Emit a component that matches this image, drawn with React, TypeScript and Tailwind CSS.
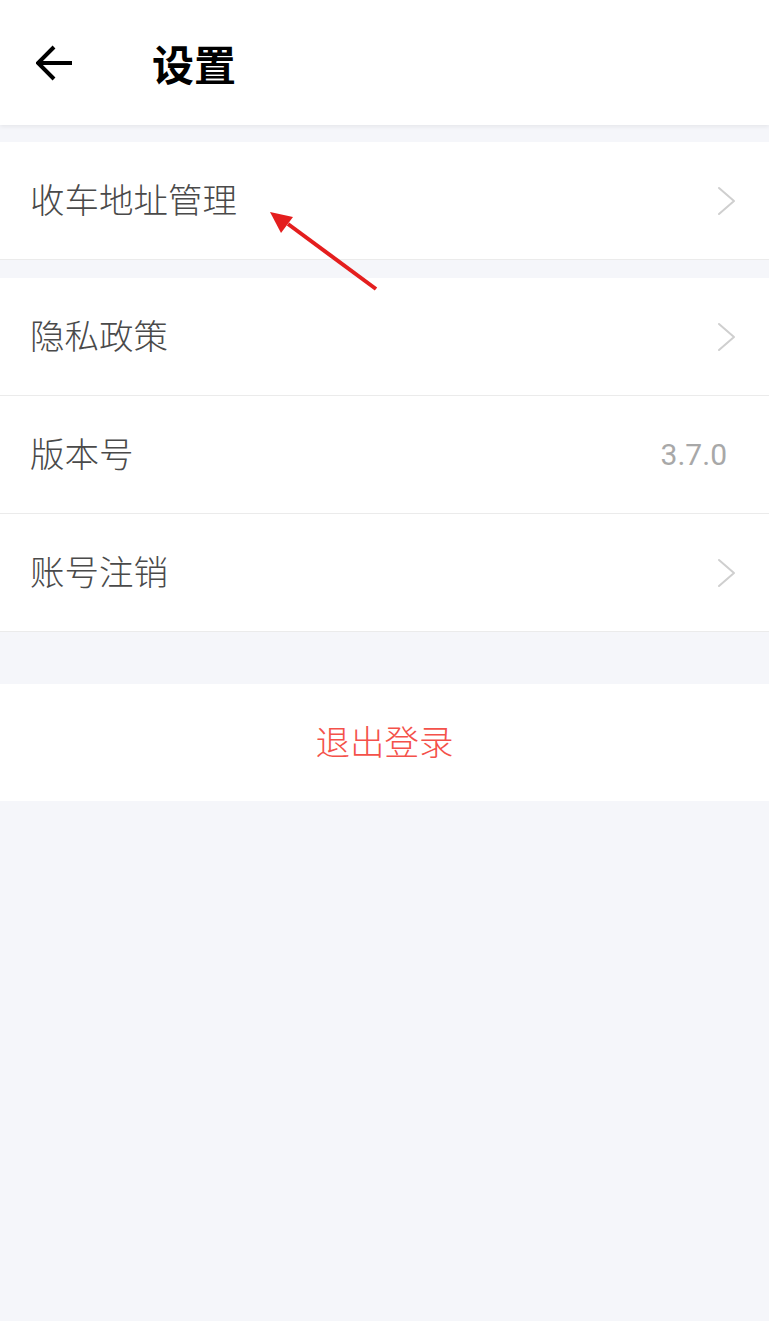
const font = { fontFamily: '"Noto Sans CJK SC", Roboto, sans-serif' };

function Chevron() {
  return (
    <svg width="20" height="30" viewBox="0 0 20 30" fill="none" aria-hidden="true">
      <path d="M2 2L17 15L2 28" stroke="#cfcfcf" strokeWidth="2" strokeLinecap="round" strokeLinejoin="round" />
    </svg>
  );
}

type RowProps = {
  label: string;
  value?: string;
  border?: boolean;
};

function Row({ label, value, border = true }: RowProps) {
  return (
    <div className={`flex h-[118px] items-center justify-between bg-white pl-[30px] pr-[32px] ${border ? 'border-b border-[#ebebeb]' : ''}`}>
      <span className="-mt-[3px] text-[34.5px] font-light text-[#4a4a4a]">{label}</span>
      {value ? (
        <span className="pr-[10px] text-[30px] text-[#a8a8a8]" style={{ fontFamily: 'Roboto, sans-serif' }}>{value}</span>
      ) : (
        <Chevron />
      )}
    </div>
  );
}

export default function App() {
  return (
    <div className="relative min-h-[1321px] w-full bg-[#f5f6fa]" style={font}>
      {/* Header */}
      <div className="relative z-10 flex h-[125px] items-center bg-white shadow-[0_2px_4px_rgba(0,0,0,0.06)]">
        <button type="button" className="ml-[36px] flex h-[40px] w-[40px] items-center" aria-label="返回">
          <svg width="38" height="36" viewBox="0 0 38 36" fill="none">
            <path d="M36 18H3M18 2L2 18L18 34" stroke="#000" strokeWidth="4" strokeLinecap="butt" strokeLinejoin="miter" />
          </svg>
        </button>
        <h1 className="ml-[76px] text-[42px] font-bold text-black">设置</h1>
      </div>

      <div className="pt-[17px]">
        <Row label="收车地址管理" />
      </div>
      <div className="pt-[18px]">
        <Row label="隐私政策" />
        <Row label="版本号" value="3.7.0" />
        <Row label="账号注销" />
      </div>

      <div className="mt-[52px] flex h-[117px] items-center justify-center bg-white">
        <span className="-mt-[3px] text-[34.5px] font-light text-[#f4514a]">退出登录</span>
      </div>

      {/* Annotation arrow */}
      <svg className="pointer-events-none absolute left-0 top-0" width="769" height="320" viewBox="0 0 769 320" aria-hidden="true">
        <path d="M376 289L288 224" stroke="#e41e1e" strokeWidth="4" strokeLinecap="butt" />
        <path d="M270 212L293 217L281 233Z" fill="#e41e1e" />
      </svg>
    </div>
  );
}
